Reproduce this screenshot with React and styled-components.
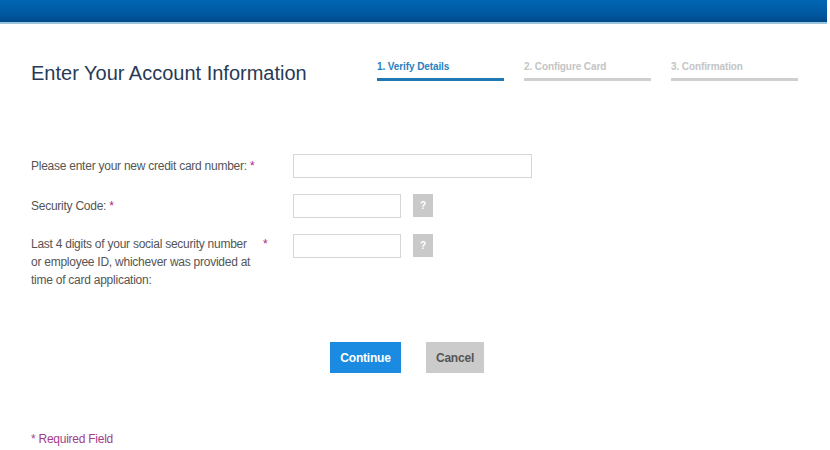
import React from 'react';
import styled, { createGlobalStyle } from 'styled-components';

const GlobalStyle = createGlobalStyle`
  html, body {
    margin: 0;
    padding: 0;
    background: #fff;
    font-family: "Liberation Sans", Arial, sans-serif;
  }
`;

const Page = styled.div`
  width: 830px;
  height: 450px;
  overflow: hidden;
  background: #fff;
`;

const TopBar = styled.div`
  height: 22px;
  width: 827px;
  background: linear-gradient(to bottom, #0066b3 0%, #0058a2 60%, #004a8a 100%);
  border-bottom: 2px solid #9cc3dc;
`;

const Content = styled.div`
  padding: 0 31px;
`;

const HeadRow = styled.div`
  display: flex;
  align-items: flex-start;
  padding-top: 37px;
`;

const Title = styled.h1`
  margin: 0;
  width: 346px;
  font-size: 20px;
  font-weight: normal;
  color: #283a55;
  line-height: 24px;
`;

const Steps = styled.div`
  display: flex;
  gap: 20px;
`;

const Step = styled.div`
  width: 127px;
  font-size: 10px;
  font-weight: bold;
  line-height: 12px;
  letter-spacing: -0.1px;
  color: ${(p) => (p.active ? '#2a7fbf' : '#c4c4c4')};
  padding-bottom: 5px;
  border-bottom: 3px solid ${(p) => (p.active ? '#1f78b4' : '#cfcfcf')};
`;

const Form = styled.div`
  margin-top: 69px;
  display: flex;
  flex-direction: column;
  gap: 16px;
`;

const Row = styled.div`
  display: flex;
  align-items: flex-start;
`;

const Label = styled.div`
  width: 262px;
  font-size: 12px;
  line-height: 18px;
  letter-spacing: -0.25px;
  color: #555;
  padding-top: ${(p) => (p.top ? p.top : 3)}px;
  display: flex;
`;

const LabelText = styled.span`
  width: ${(p) => (p.width ? `${p.width}px` : 'auto')};
`;

const Star = styled.span`
  color: #b0267f;
  margin-left: ${(p) => (p.gap ? p.gap : 3)}px;
`;

const Input = styled.input`
  box-sizing: border-box;
  width: ${(p) => p.width}px;
  height: 24px;
  margin: 0;
  border: 1px solid #d6d6d6;
  background: #fff;
  outline: none;
`;

const Help = styled.button`
  width: 20px;
  height: 23px;
  margin-left: 12px;
  padding: 0;
  border: none;
  background: #c9c9c9;
  color: #fff;
  font-family: "Liberation Sans", Arial, sans-serif;
  font-size: 10px;
  font-weight: bold;
`;

const Actions = styled.div`
  display: flex;
  gap: 25px;
  margin-top: 53px;
  padding-left: 299px;
`;

const Button = styled.button`
  height: 31px;
  width: ${(p) => (p.primary ? 71 : 58)}px;
  padding: 0;
  border: none;
  background: ${(p) => (p.primary ? '#1a8be0' : '#cbcbcb')};
  color: ${(p) => (p.primary ? '#fff' : '#555')};
  font-family: "Liberation Sans", Arial, sans-serif;
  font-size: 12px;
  font-weight: bold;
  letter-spacing: -0.2px;
`;

const Required = styled.div`
  margin-top: 59px;
  font-size: 12px;
  letter-spacing: -0.25px;
  color: #a23d8c;
`;

export default function App() {
  return (
    <Page>
      <GlobalStyle />
      <TopBar />
      <Content>
        <HeadRow>
          <Title>Enter Your Account Information</Title>
          <Steps>
            <Step active>1. Verify Details</Step>
            <Step>2. Configure Card</Step>
            <Step>3. Confirmation</Step>
          </Steps>
        </HeadRow>
        <Form>
          <Row>
            <Label>
              Please enter your new credit card number:<Star>*</Star>
            </Label>
            <Input width={239} />
          </Row>
          <Row>
            <Label>
              Security Code:<Star>*</Star>
            </Label>
            <Input width={108} />
            <Help>?</Help>
          </Row>
          <Row>
            <Label top={1}>
              <LabelText width={222}>
                Last 4 digits of your social security number or employee ID,
                whichever was provided at time of card application:
              </LabelText>
              <Star gap={10}>*</Star>
            </Label>
            <Input width={108} />
            <Help>?</Help>
          </Row>
        </Form>
        <Actions>
          <Button primary>Continue</Button>
          <Button>Cancel</Button>
        </Actions>
        <Required>* Required Field</Required>
      </Content>
    </Page>
  );
}
